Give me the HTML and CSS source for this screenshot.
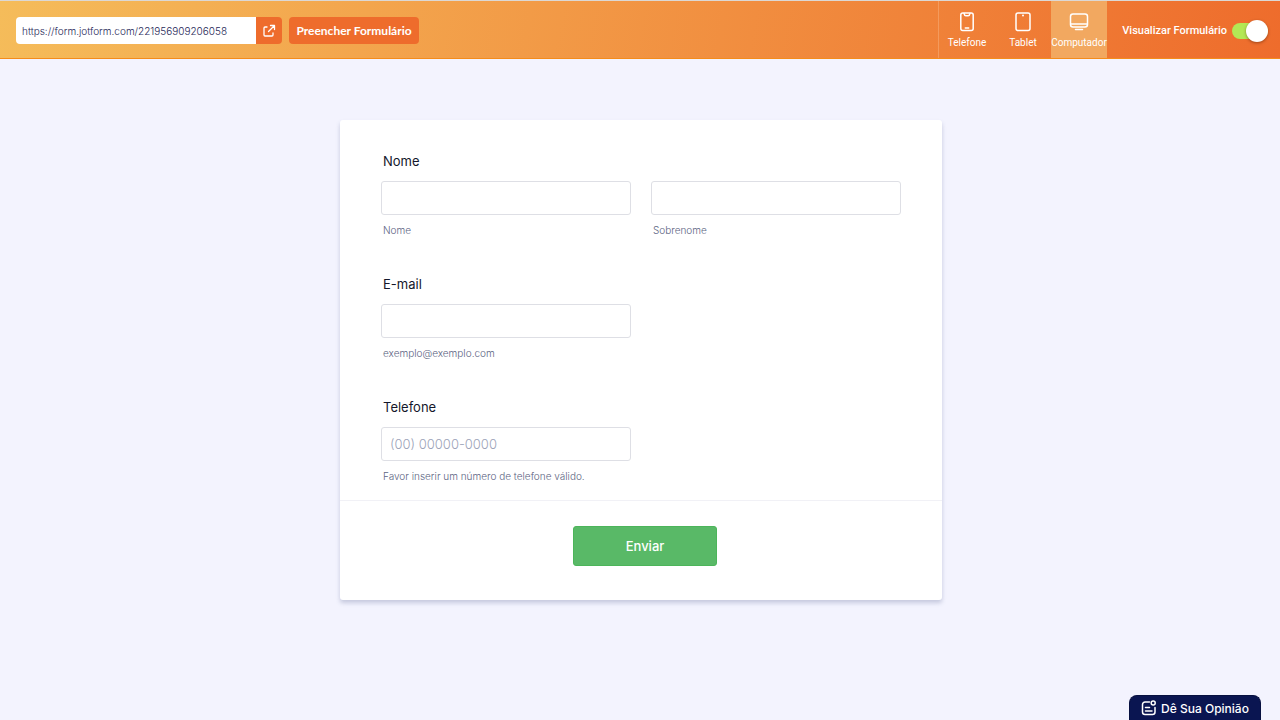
FILE: index.html
```html
<!DOCTYPE html>
<html lang="pt-BR">
<head>
    <meta charset="UTF-8">
    <meta name="viewport" content="width=device-width, initial-scale=1.0">
    <title>Visualizar Formulário</title>
    <link rel="stylesheet" href="styles.css">
</head>
<body>
    <header class="topbar">
        <div class="share">
            <input type="text" class="share-url" aria-label="Link do formulário" value="https://form.jotform.com/221956909206058" readonly>
            <a href="#" class="share-open" aria-label="Abrir em nova aba">
                <svg width="14" height="14" viewBox="0 0 14 14" fill="none" stroke="#fff" stroke-width="1.3" stroke-linecap="round" stroke-linejoin="round">
                    <path d="M5 3H3a1 1 0 0 0-1 1v7a1 1 0 0 0 1 1h7a1 1 0 0 0 1-1V9"/>
                    <path d="M8.500 1.500H12.500v4M12.500 1.500L6.500 7.500"/>
                </svg>
            </a>
        </div>
        <a href="#" class="fill-button">Preencher Formulário</a>

        <div class="devices">
            <button type="button" class="device">
                <svg width="20" height="20" viewBox="0 0 20 20" fill="none" stroke="#fff" stroke-width="1.500" stroke-linecap="round">
                    <rect x="3.800" y="1" width="12.400" height="17.600" rx="2"/>
                    <path d="M7 1.400c.300 1.800.800 2.300 1.800 2.300h2.400c1 0 1.500-.500 1.800-2.300M8.300 16h3.400"/>
                </svg>
                Telefone
            </button>
            <button type="button" class="device">
                <svg width="20" height="20" viewBox="0 0 20 20" fill="none" stroke="#fff" stroke-width="1.500">
                    <rect x="3" y="1" width="14" height="17.600" rx="2"/>
                    <circle cx="10" cy="3.600" r="1" fill="#fff" stroke="none"/>
                </svg>
                Tablet
            </button>
            <button type="button" class="device active">
                <svg width="20" height="20" viewBox="0 0 20 20" fill="none" stroke="#fff" stroke-width="1.500" stroke-linecap="round">
                    <rect x="1.500" y="2" width="17" height="13" rx="2.500"/>
                    <path d="M2 12h16M6.500 17.600h7"/>
                </svg>
                Computador
            </button>
        </div>

        <label class="preview">
            Visualizar Formulário
            <input type="checkbox" class="toggle" checked>
        </label>
    </header>

    <main>
        <form class="card">
            <div class="fields">
                <fieldset class="field">
                    <legend class="field-label">Nome</legend>
                    <div class="row">
                        <div class="column">
                            <input type="text" id="firstName" class="field-input">
                            <label for="firstName" class="hint">Nome</label>
                        </div>
                        <div class="column">
                            <input type="text" id="lastName" class="field-input">
                            <label for="lastName" class="hint">Sobrenome</label>
                        </div>
                    </div>
                </fieldset>
                <div class="field">
                    <label for="email" class="field-label">E-mail</label>
                    <div class="row">
                        <div class="column">
                            <input type="email" id="email" class="field-input" aria-describedby="emailHint">
                            <span id="emailHint" class="hint">exemplo@exemplo.com</span>
                        </div>
                    </div>
                </div>
                <div class="field">
                    <label for="phone" class="field-label">Telefone</label>
                    <div class="row">
                        <div class="column">
                            <input type="tel" id="phone" class="field-input" placeholder="(00) 00000-0000" aria-describedby="phoneHint">
                            <span id="phoneHint" class="hint">Favor inserir um número de telefone válido.</span>
                        </div>
                    </div>
                </div>
            </div>
            <div class="card-footer">
                <button type="submit" class="submit-button">Enviar</button>
            </div>
        </form>
    </main>

    <button type="button" class="feedback">
        <svg width="16" height="16" viewBox="0 0 16 16" fill="none" stroke="#fff" stroke-width="1.500" stroke-linecap="round">
            <path d="M8.500 2H4a2.500 2.500 0 0 0-2.500 2.500V12A2.500 2.500 0 0 0 4 14.500h7.500A2.500 2.500 0 0 0 14 12V7.500M4.500 7.500h4M4.500 11h6.500"/>
            <circle cx="12.200" cy="3" r="2"/>
        </svg>
        Dê Sua Opinião
    </button>
</body>
</html>
```
FILE: styles.css
```css
* {
    box-sizing: border-box;
}
body {
    font-family: Inter, "Liberation Sans", sans-serif;
    background-color: #f3f3fe;
    color: #0a1551;
    margin: 0;
}
button, input {
    font-family: inherit;
}
.topbar {
    display: flex;
    align-items: center;
    height: 59px;
    padding-left: 16px;
    border-top: 1px solid #dcd8d4;
    border-bottom: 1px solid #f58c1a;
    background: linear-gradient(100deg, #f5bc5a 0%, #ee6c2c 100%);
}
.share {
    display: flex;
    height: 27px;
    margin-top: 2px;
    border-radius: 4px;
    overflow: hidden;
}
.share-url {
    width: 240px;
    padding: 0 6px;
    border: none;
    font-size: 10px;
    font-weight: 300;
    color: #1f2858;
}
.share-open {
    display: flex;
    align-items: center;
    justify-content: center;
    width: 26px;
    background-color: #ee6c2c;
}
.fill-button {
    width: 130px;
    margin-top: 2px;
    margin-left: 7px;
    border-radius: 4px;
    background-color: #ee6c2c;
    color: white;
    font-family: Lato, sans-serif;
    font-size: 12px;
    font-weight: 700;
    line-height: 27px;
    text-align: center;
    text-decoration: none;
}
.devices {
    display: flex;
    height: 100%;
    margin-left: auto;
    border-left: 1px solid #f49a5c;
}
.device {
    display: flex;
    flex-direction: column;
    align-items: center;
    gap: 5px;
    width: 56px;
    padding: 11px 0 0;
    border: none;
    background: none;
    color: white;
    font-family: Roboto, sans-serif;
    font-size: 10px;
    line-height: 12px;
    cursor: pointer;
}
.device.active {
    background-color: #f2a860;
}
.preview {
    display: flex;
    align-items: center;
    justify-content: flex-end;
    gap: 5px;
    width: 173px;
    padding: 2px 12px 0 0;
    color: white;
    font-family: Roboto, sans-serif;
    font-size: 11px;
    font-weight: 500;
}
.toggle {
    appearance: none;
    display: flex;
    align-items: center;
    justify-content: flex-end;
    width: 36px;
    height: 16px;
    margin: 0;
    border-radius: 8px;
    background-color: #b3e855;
    cursor: pointer;
}
.toggle::before {
    content: "";
    width: 22px;
    height: 22px;
    border-radius: 50%;
    background-color: white;
    box-shadow: 0 1px 3px rgba(80, 30, 0, 0.5);
}
main {
    padding-left: 2px;
}
.card {
    max-width: 602px;
    margin: 61px auto 40px;
    border-radius: 3px;
    background-color: white;
    box-shadow: 0 3px 4px rgba(84, 95, 140, 0.28);
}
.fields {
    display: flex;
    flex-direction: column;
    gap: 39px;
    padding: 33px 41px 17px;
}
.field {
    min-width: 0;
    margin: 0;
    padding: 0;
    border: none;
}
.field-label {
    display: block;
    margin-bottom: 11px;
    padding: 0 2px;
    color: #14172b;
    font-size: 13px;
    line-height: 17px;
}
.row {
    display: grid;
    grid-template-columns: 1fr 1fr;
    gap: 20px;
}
.field-input {
    display: block;
    width: 100%;
    height: 34px;
    padding: 0 8px;
    border: 1px solid #dedfe5;
    border-radius: 3px;
    font-size: 13px;
}
.field-input::placeholder {
    color: #9ba2b8;
    font-weight: 300;
}
.hint {
    display: block;
    margin-top: 9px;
    padding: 0 2px;
    color: #5c6482;
    font-size: 10px;
    font-weight: 300;
    line-height: 13px;
}
.card-footer {
    display: flex;
    justify-content: center;
    padding: 25px 0 34px 8px;
    border-top: 1px solid #f1f1f6;
}
.submit-button {
    width: 144px;
    height: 40px;
    border: 1px solid #4cb55a;
    border-radius: 3px;
    background-color: #59b967;
    color: white;
    font-size: 13px;
    font-weight: 500;
    cursor: pointer;
}
.feedback {
    position: fixed;
    right: 19px;
    bottom: 0;
    display: flex;
    align-items: center;
    justify-content: center;
    gap: 4px;
    width: 132px;
    height: 25px;
    padding: 0;
    border: 1px solid #071040;
    border-bottom: none;
    border-radius: 8px 8px 0 0;
    background-color: #0a1551;
    color: white;
    font-size: 12px;
    font-weight: 500;
    white-space: nowrap;
    cursor: pointer;
}
```
